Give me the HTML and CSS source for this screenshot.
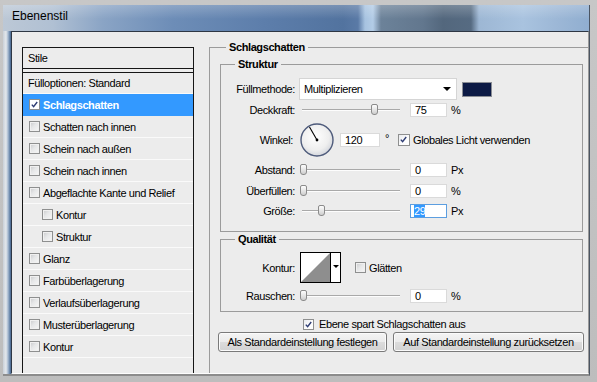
FILE: index.html
```html
<!DOCTYPE html>
<html lang="de">
<head>
<meta charset="UTF-8">
<meta name="viewport" content="width=device-width, initial-scale=1.0">
<title>Ebenenstil</title>
<link rel="stylesheet" href="styles.css">
</head>
<body>

<div class="screen">
    <div class="window">
        <div class="titlebar">Ebenenstil</div>
        <div class="frame">
            <div class="client">

                <div class="styles-list">
                    <div class="list-head">Stile</div>
                    <div class="list-items">
                        <div class="item first">Fülloptionen: Standard</div>
                        <div class="item selected"><span class="check on"><svg viewBox="0 0 11 11"><path d="M2.2 5.6 L4.4 8.2 L8.8 2.4"/></svg></span>Schlagschatten</div>
                        <div class="item"><span class="check"></span>Schatten nach innen</div>
                        <div class="item"><span class="check"></span>Schein nach außen</div>
                        <div class="item"><span class="check"></span>Schein nach innen</div>
                        <div class="item"><span class="check"></span>Abgeflachte Kante und Relief</div>
                        <div class="item sub"><span class="check"></span>Kontur</div>
                        <div class="item sub"><span class="check"></span>Struktur</div>
                        <div class="item"><span class="check"></span>Glanz</div>
                        <div class="item"><span class="check"></span>Farbüberlagerung</div>
                        <div class="item"><span class="check"></span>Verlaufsüberlagerung</div>
                        <div class="item"><span class="check"></span>Musterüberlagerung</div>
                        <div class="item"><span class="check"></span>Kontur</div>
                    </div>
                </div>

                <fieldset class="group main">
                    <legend class="legend-main">Schlagschatten</legend>

                    <fieldset class="group sub-group struktur">
                        <legend>Struktur</legend>

                        <div class="row row-select">
                            <span class="label">Füllmethode:</span>
                            <div class="select">
                                <span>Multiplizieren</span>
                                <span class="arrow"></span>
                            </div>
                            <span class="swatch"></span>
                        </div>

                        <div class="row row-field gap3">
                            <span class="label">Deckkraft:</span>
                            <div class="slider"><span class="track"></span><span class="thumb" style="left:71px"></span></div>
                            <span class="field">75</span>
                            <span class="unit">%</span>
                        </div>

                        <div class="row row-angle">
                            <span class="label">Winkel:</span>
                            <svg class="dial" viewBox="0 0 34 34">
                                <defs>
                                    <radialGradient id="dialfill" cx="45%" cy="40%" r="60%">
                                        <stop offset="0" stop-color="#ffffff"/>
                                        <stop offset="0.7" stop-color="#eeeeee"/>
                                        <stop offset="1" stop-color="#d4d7dd"/>
                                    </radialGradient>
                                </defs>
                                <circle cx="17" cy="17" r="16" fill="url(#dialfill)" stroke="#4e5b7b" stroke-width="1.4"/>
                                <line x1="17" y1="17" x2="9.5" y2="4" stroke="#000" stroke-width="1.1"/>
                                <circle cx="17" cy="17" r="1.4" fill="#000"/>
                            </svg>
                            <span class="field wide">120</span>
                            <span class="deg">°</span>
                            <span class="check on"><svg viewBox="0 0 11 11"><path d="M2.2 5.6 L4.4 8.2 L8.8 2.4"/></svg></span>
                            <span class="check-text">Globales Licht verwenden</span>
                        </div>

                        <div class="row row-field gap6">
                            <span class="label">Abstand:</span>
                            <div class="slider"><span class="track"></span><span class="thumb" style="left:0px"></span></div>
                            <span class="field">0</span>
                            <span class="unit">Px</span>
                        </div>

                        <div class="row row-field gap7">
                            <span class="label">Überfüllen:</span>
                            <div class="slider"><span class="track"></span><span class="thumb" style="left:0px"></span></div>
                            <span class="field">0</span>
                            <span class="unit">%</span>
                        </div>

                        <div class="row row-field gap6">
                            <span class="label">Größe:</span>
                            <div class="slider"><span class="track"></span><span class="thumb" style="left:18px"></span></div>
                            <span class="field focus"><span class="sel">29</span></span>
                            <span class="unit">Px</span>
                        </div>
                    </fieldset>

                    <fieldset class="group sub-group qualitaet">
                        <legend>Qualität</legend>

                        <div class="row row-contour">
                            <span class="label">Kontur:</span>
                            <div class="contour">
                                <svg class="curve" viewBox="0 0 29 29"><polygon points="0,29 29,0 29,29" fill="#8e8e8e"/></svg>
                                <span class="contour-drop"><span class="arrow small"></span></span>
                            </div>
                            <span class="check smooth"></span>
                            <span class="check-text">Glätten</span>
                        </div>

                        <div class="row row-field gap6">
                            <span class="label">Rauschen:</span>
                            <div class="slider"><span class="track"></span><span class="thumb" style="left:0px"></span></div>
                            <span class="field">0</span>
                            <span class="unit">%</span>
                        </div>
                    </fieldset>

                    <div class="knockout">
                        <span class="check on"><svg viewBox="0 0 11 11"><path d="M2.2 5.6 L4.4 8.2 L8.8 2.4"/></svg></span>
                        <span class="knockout-text">Ebene spart Schlagschatten aus</span>
                    </div>

                    <div class="buttons">
                        <button class="btn btn-set">Als Standardeinstellung festlegen</button>
                        <button class="btn btn-reset">Auf Standardeinstellung zurücksetzen</button>
                    </div>
                </fieldset>

            </div>
        </div>
    </div>
</div>

</body>
</html>
```

FILE: styles.css
```css
body {
    margin: 0;
    padding: 0;
    font-family: "Liberation Sans", Arial, sans-serif;
    font-size: 11px;
    letter-spacing: -0.4px;
    color: #000;
}

.screen {
    width: 597px;
    height: 382px;
    box-sizing: border-box;
    padding: 5px 7px 0 3px;
    background: linear-gradient(to bottom, #c7c7c7 0, #bdbdbd 100%);
    overflow: hidden;
}

.window {
    height: 369px;
    display: flex;
    flex-direction: column;
    border-right: 1px solid #4b5562;
    border-bottom: 2px solid #8c8c8c;
    background:
        linear-gradient(to bottom, rgba(255, 255, 255, 0.22) 0, rgba(255, 255, 255, 0) 14px),
        linear-gradient(to right, #bcc8d6 0, #b0c0d3 50px, #8aa4c5 100px, #6d8db7 170px, #5d7eab 260px, #52739f 340px, #5a7aa6 355px, #a7c3e0 362px, #b3cce6 370px, #6c8299 378px, #62778e 420px, #53677d 440px, #566b82 468px, #9db7d4 476px, #a9c3df 520px, #9cb7d6 555px, #90aed0 586px);
}

.titlebar {
    height: 26px;
    line-height: 23px;
    padding-left: 9px;
    font-size: 12px;
    letter-spacing: 0;
}

.frame {
    flex: 1;
    display: flex;
    padding-left: 8px;
    background: linear-gradient(to right, #c9d0d8 0, #e4e8ec 3px, #a7bad0 5px, #5f7ea4 7px, #47658c 8px);
}

.client {
    flex: 1;
    display: flex;
    align-items: stretch;
    background-color: #ececec;
    border-top: 1px solid #2e3744;
    border-left: 1px solid #2e3744;
    border-bottom: 1px solid #fdfdfd;
    border-right: 1px solid #9a9a9a;
}

/* left: list of styles */

.styles-list {
    width: 172px;
    box-sizing: border-box;
    margin: 15px 0 0 10px;
    border: 1px solid #161616;
    border-bottom: none;
}

.list-head {
    height: 20px;
    line-height: 20px;
    padding-left: 5px;
    border-bottom: 1px solid #161616;
}

.list-items {
    margin-top: 3px;
    border-top: 1px solid #161616;
}

.item {
    display: flex;
    align-items: center;
    height: 21px;
    padding-left: 6px;
    border-bottom: 1px solid #fafafa;
}

.item.first {
    height: 20px;
    padding-left: 5px;
}

.item.sub {
    padding-left: 19px;
}

.item.selected {
    background-color: #3399ff;
    border-bottom-color: #3399ff;
    color: #fff;
    font-weight: bold;
}

.item .check {
    margin-right: 3px;
}

/* checkboxes */

.check {
    width: 11px;
    height: 11px;
    flex: none;
    box-sizing: border-box;
    border: 1px solid #8e8f8f;
    background: linear-gradient(135deg, #c8c9cb 0, #e6e7e8 45%, #f7f7f7 100%);
    box-shadow: inset 0 0 0 1px #f0f0f0;
}

.check.on {
    background: linear-gradient(135deg, #e9ebee 0, #fdfdfd 60%);
    box-shadow: none;
}

.item.selected .check.on {
    background: #fff;
}

.check svg {
    display: block;
    width: 9px;
    height: 9px;
}

.check svg path {
    fill: none;
    stroke: #2d3c73;
    stroke-width: 1.7;
}

/* right: settings */

.group {
    margin: 0;
    padding: 0;
    min-width: 0;
    box-sizing: border-box;
    border: 1px solid #9b9b9b;
}

.group legend {
    padding: 0 3px;
    line-height: 14px;
    font-weight: bold;
    margin-left: 14px;
}

.main {
    flex: 1;
    margin: 8px 0 0 15px;
    border-right: none;
    border-bottom: none;
}

.main .legend-main {
    margin-left: 16px;
}

.sub-group {
    width: 363px;
    margin-left: 10px;
}

.struktur {
    margin-top: 3px;
    padding: 7px 0 13px 0;
}

.qualitaet {
    padding: 6px 0 8px 0;
}

.row {
    display: flex;
    align-items: center;
}

.label {
    width: 74px;
    flex: none;
    text-align: right;
}

.gap3 { margin-top: 3px; }
.gap6 { margin-top: 6px; }
.gap7 { margin-top: 7px; }

.row-select {
    height: 22px;
}

.select {
    width: 158px;
    height: 22px;
    box-sizing: border-box;
    margin-left: 4px;
    padding-left: 4px;
    display: flex;
    align-items: center;
    justify-content: space-between;
    background-color: #fff;
    border: 1px solid #d5d5d5;
}

.arrow {
    width: 0;
    height: 0;
    margin-right: 5px;
    border-left: 4px solid transparent;
    border-right: 4px solid transparent;
    border-top: 4px solid #000;
}

.arrow.small {
    margin: 0;
    border-left-width: 3px;
    border-right-width: 3px;
    border-top-width: 3px;
}

.swatch {
    width: 30px;
    height: 15px;
    box-sizing: border-box;
    margin-left: 5px;
    background-color: #0c1a45;
    border: 1px solid #8a8d94;
}

.row-field {
    height: 14px;
}

.slider {
    position: relative;
    width: 102px;
    height: 14px;
    margin-left: 5px;
    display: flex;
    align-items: center;
}

.track {
    display: block;
    width: 98px;
    margin-left: 2px;
    height: 0;
    border-top: 1px solid #a9a9a9;
    border-bottom: 1px solid #fdfdfd;
}

.thumb {
    position: absolute;
    top: 1px;
    width: 7px;
    height: 11px;
    box-sizing: border-box;
    border: 1px solid #8b8b8b;
    border-radius: 2px 2px 3px 3px;
    background: linear-gradient(to bottom, #fdfdfd 0, #e2e2e2 60%, #cdcdcd 100%);
}

.field {
    width: 37px;
    height: 14px;
    box-sizing: border-box;
    margin-left: 8px;
    padding-left: 4px;
    line-height: 13px;
    background-color: #fff;
    border: 1px solid #dadada;
}

.field.wide {
    width: 40px;
    margin-left: 6px;
}

.field.focus {
    border-color: #5c9ee0;
    padding-left: 3px;
}

.field .sel {
    background-color: #3399ff;
    color: #fff;
}

.unit {
    margin-left: 4px;
}

.row-angle {
    margin-top: 6px;
    height: 34px;
}

.row-angle .label {
    width: 72px;
    margin-right: 2px;
}

.dial {
    width: 34px;
    height: 34px;
    margin-left: 5px;
}

.deg {
    width: 13px;
    margin-left: 5px;
    margin-top: -5px;
}

.check-text {
    margin-left: 3px;
}

.row-angle .check {
    width: 12px;
    height: 12px;
}

.row-contour {
    height: 31px;
}

.contour {
    display: flex;
    margin-left: 5px;
    height: 31px;
}

.curve {
    width: 29px;
    height: 29px;
    border: 1px solid #000;
    background-color: #fff;
}

.contour-drop {
    width: 10px;
    height: 29px;
    display: flex;
    justify-content: center;
    padding-top: 12px;
    box-sizing: border-box;
    height: 31px;
    background-color: #fff;
    border: 1px solid #000;
    border-left: none;
}

.check.smooth {
    margin-left: 14px;
}

.knockout {
    display: flex;
    align-items: center;
    height: 12px;
    margin: 6px 0 0 93px;
}

.knockout-text {
    margin-left: 5px;
}

.buttons {
    display: flex;
    gap: 6px;
    margin: 2px 0 0 8px;
}

.btn {
    height: 20px;
    padding: 0;
    font-family: "Liberation Sans", Arial, sans-serif;
    font-size: 11px;
    letter-spacing: -0.4px;
    color: #000;
    border: 1px solid #7a7a7a;
    border-radius: 3px;
    background: linear-gradient(to bottom, #f4f4f4 0, #ebebeb 50%, #dcdcdc 51%, #d2d2d2 100%);
    box-shadow: inset 0 0 0 1px #fbfbfb;
}

.btn-set {
    width: 169px;
}

.btn-reset {
    width: 191px;
}
```
